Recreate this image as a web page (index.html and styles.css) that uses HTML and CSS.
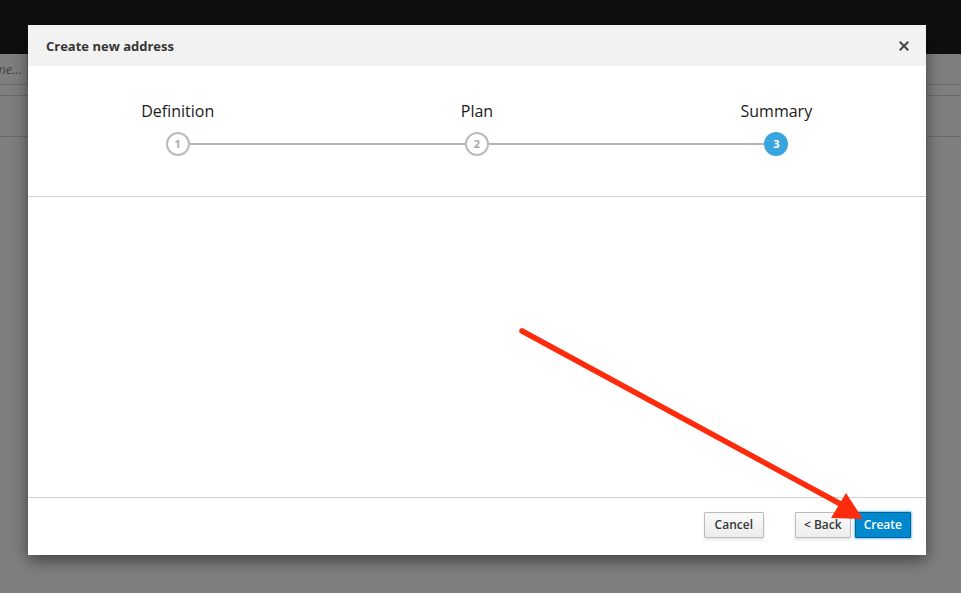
FILE: index.html
```html
<!DOCTYPE html>
<html lang="en">
<head>
<meta charset="utf-8">
<title>Create new address</title>
<link rel="stylesheet" href="styles.css">
</head>
<body>
<div class="page">
  <div class="topbar"></div>
  <div class="toolbar">
    <div class="filter">Filter by name...</div>
  </div>
  <div class="subbar"></div>
</div>
<div class="backdrop"></div>
<div class="modal">
  <div class="modal-header">
    <h4 class="modal-title">Create new address</h4>
    <button class="close" aria-label="Close">
      <svg width="10" height="10" viewBox="0 0 10 10"><path d="M1.5 1.5 L8.5 8.5 M8.5 1.5 L1.5 8.5" stroke="#4d4d4d" stroke-width="2.2" stroke-linecap="square"/></svg>
    </button>
  </div>
  <div class="steps">
    <div class="step first">
      <div class="step-label">Definition</div>
      <div class="step-track"><span class="step-num">1</span></div>
    </div>
    <div class="step">
      <div class="step-label">Plan</div>
      <div class="step-track"><span class="step-num">2</span></div>
    </div>
    <div class="step last active">
      <div class="step-label">Summary</div>
      <div class="step-track"><span class="step-num">3</span></div>
    </div>
  </div>
  <div class="modal-body"></div>
  <div class="modal-footer">
    <button class="btn btn-cancel">Cancel</button>
    <div class="btn-group">
      <button class="btn">&lt; Back</button>
      <button class="btn btn-primary">Create</button>
    </div>
  </div>
</div>
<svg class="arrow" width="961" height="593" viewBox="0 0 961 593">
  <line x1="522" y1="331" x2="846" y2="507" stroke="#fe2b0c" stroke-width="5.5" stroke-linecap="round"/>
  <polygon points="863,519 846,493 831,518" fill="#fe2b0c"/>
</svg>
</body>
</html>
```
FILE: styles.css
```css
html, body {
  margin: 0;
  padding: 0;
}
body {
  width: 961px;
  height: 593px;
  overflow: hidden;
  background: #ffffff;
  font-family: "Open Sans", "Liberation Sans", sans-serif;
  position: relative;
}
.page {
  display: flex;
  flex-direction: column;
}
.topbar {
  height: 54px;
  background: #1e1e1e;
}
.toolbar {
  height: 30px;
  border-bottom: 1px solid #d6d6d6;
  display: flex;
  align-items: center;
}
.filter {
  width: 130px;
  margin-left: -102px;
  padding-right: 5px;
  text-align: right;
  white-space: nowrap;
  font-size: 13px;
  font-style: italic;
  color: #888888;
  height: 30px;
  line-height: 30px;
  box-sizing: border-box;
  border-right: 1px solid #d6d6d6;
}
.subbar {
  height: 40px;
  border-top: 1px solid #d6d6d6;
  margin-top: 10px;
  border-bottom: 1px solid #d6d6d6;
}
.backdrop {
  position: absolute;
  inset: 0;
  background: rgba(0, 0, 0, 0.5);
}
.modal {
  position: absolute;
  left: 28px;
  top: 25px;
  width: 898px;
  height: 530px;
  background: #fff;
  box-shadow: 0 5px 15px rgba(0, 0, 0, 0.5);
  display: flex;
  flex-direction: column;
}
.modal-header {
  height: 41px;
  background: #f2f2f2;
  display: flex;
  align-items: center;
  justify-content: space-between;
  padding: 0 18px;
}
.modal-title {
  margin: 0;
  font-size: 13px;
  font-weight: 700;
  line-height: 18px;
  color: #363636;
}
.close {
  border: 0;
  background: none;
  padding: 0;
  margin-right: -1px;
  width: 10px;
  height: 10px;
  display: flex;
}
.steps {
  display: flex;
  box-sizing: border-box;
  padding-top: 34px;
  border-bottom: 1px solid #d1d1d1;
  flex: none;
  height: 131px;
}
.step {
  flex: 1;
  display: flex;
  flex-direction: column;
  align-items: center;
}
.step-label {
  font-size: 16px;
  line-height: 22px;
  color: #1a1a1a;
}
.step-track {
  margin-top: 10px;
  align-self: stretch;
  display: flex;
  align-items: center;
}
.step-track::before,
.step-track::after {
  content: "";
  flex: 1;
  height: 2px;
  background: #b3b3b3;
}
.step.first .step-track::before,
.step.last .step-track::after {
  background: transparent;
}
.step-num {
  width: 20px;
  height: 20px;
  border: 2px solid #bbbbbb;
  border-radius: 50%;
  background: #fff;
  color: #a8a8a8;
  font-size: 11px;
  font-weight: 700;
  line-height: 20px;
  text-align: center;
}
.step.active .step-num {
  background: #39a5dc;
  border-color: #39a5dc;
  color: #fff;
}
.modal-body {
  flex: 1;
}
.modal-footer {
  height: 58px;
  box-sizing: border-box;
  border-top: 1px solid #d1d1d1;
  padding: 14px 15px 17px;
  display: flex;
  justify-content: flex-end;
  align-items: flex-start;
  gap: 31px;
}
.btn-group {
  display: flex;
  gap: 4px;
}
.btn {
  font-family: "Open Sans", "Liberation Sans", sans-serif;
  font-size: 12px;
  font-weight: 600;
  line-height: 18px;
  height: 26px;
  padding: 3px 8px;
  border: 1px solid #bbbbbb;
  border-radius: 1px;
  background: linear-gradient(#fafafa, #ededed);
  color: #363636;
  box-shadow: 0 2px 3px rgba(3, 3, 3, 0.1);
}
.btn-cancel {
  padding: 3px 10px;
}
.btn-primary {
  background: #0088ce;
  border-color: #00659c;
  color: #fff;
  box-shadow: 0 0 2px 1px rgba(0, 136, 206, 0.5);
}
.arrow {
  position: absolute;
  left: 0;
  top: 0;
}
```
